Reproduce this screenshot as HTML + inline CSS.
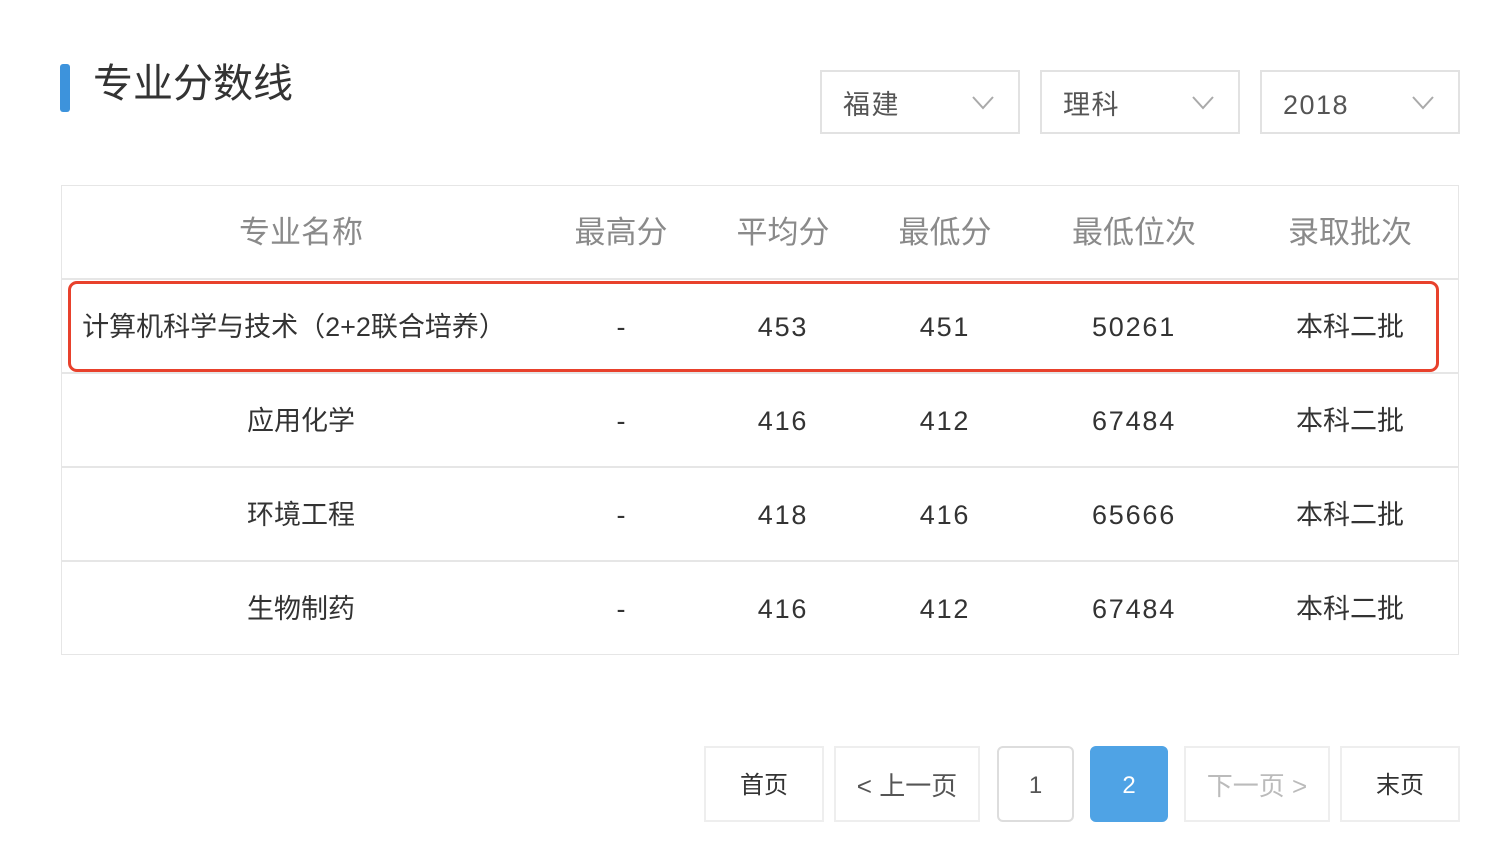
<!DOCTYPE html>
<html><head><meta charset="utf-8"><style>
body{margin:0;width:1502px;height:862px;background:#fff;font-family:"Liberation Sans","Noto Sans CJK SC",sans-serif;position:relative;overflow:hidden}
.a{position:absolute}
.bar{left:60px;top:64px;width:10px;height:48px;background:#3d93dc;border-radius:3px}
.title{left:93px;top:58px;font-size:40px;color:#333;line-height:52px}
.dd{top:70px;width:200px;height:64px;border:2px solid #e2e2e2;box-sizing:border-box}
.dd span{position:absolute;left:21px;top:16px;font-size:27px;color:#555;line-height:34px;letter-spacing:1.5px}
.dd svg{position:absolute;right:24px;top:24px}
.tbl{left:61px;top:185px;width:1398px;height:470px;border:1.5px solid #e6e6e6;box-sizing:border-box}
.hl{left:61px;width:1398px;height:1.5px;background:#e6e6e6}
.c{position:absolute;transform:translateX(-50%);white-space:nowrap;font-size:27px;line-height:34px}
.h{color:#8a8a8a;font-size:31px}
.d{color:#333}
.n{letter-spacing:1.8px}
.red{left:68px;top:281px;width:1371px;height:91px;border:3.5px solid #e8412c;border-radius:9px;box-sizing:border-box}
.pb{top:746px;height:76px;border:2px solid #eee;box-sizing:border-box;font-size:24px;color:#333;text-align:center;line-height:76px}
</style></head><body>
<div class="a bar"></div>
<div class="a title">专业分数线</div>
<div class="a dd" style="left:820px"><span>福建</span><svg width="22" height="14"><path d="M1 1l10 11 10-11" fill="none" stroke="#aaa" stroke-width="2"/></svg></div>
<div class="a dd" style="left:1040px"><span>理科</span><svg width="22" height="14"><path d="M1 1l10 11 10-11" fill="none" stroke="#aaa" stroke-width="2"/></svg></div>
<div class="a dd" style="left:1260px"><span>2018</span><svg width="22" height="14"><path d="M1 1l10 11 10-11" fill="none" stroke="#aaa" stroke-width="2"/></svg></div>
<div class="a tbl"></div>
<div class="a hl" style="top:278px"></div>
<div class="a hl" style="top:372px"></div>
<div class="a hl" style="top:466px"></div>
<div class="a hl" style="top:560px"></div>
<div class="c h" style="left:301px;top:216px">专业名称</div>
<div class="c h" style="left:621px;top:216px">最高分</div>
<div class="c h" style="left:783px;top:216px">平均分</div>
<div class="c h" style="left:945px;top:216px">最低分</div>
<div class="c h" style="left:1134px;top:216px">最低位次</div>
<div class="c h" style="left:1350px;top:216px">录取批次</div>

<div class="c d" style="left:294px;top:310px">计算机科学与技术（2+2联合培养）</div>
<div class="c d" style="left:621px;top:310px">-</div>
<div class="c d n" style="left:783px;top:310px">453</div>
<div class="c d n" style="left:945px;top:310px">451</div>
<div class="c d n" style="left:1134px;top:310px">50261</div>
<div class="c d" style="left:1350px;top:310px">本科二批</div>

<div class="c d" style="left:301px;top:404px">应用化学</div>
<div class="c d" style="left:621px;top:404px">-</div>
<div class="c d n" style="left:783px;top:404px">416</div>
<div class="c d n" style="left:945px;top:404px">412</div>
<div class="c d n" style="left:1134px;top:404px">67484</div>
<div class="c d" style="left:1350px;top:404px">本科二批</div>

<div class="c d" style="left:301px;top:498px">环境工程</div>
<div class="c d" style="left:621px;top:498px">-</div>
<div class="c d n" style="left:783px;top:498px">418</div>
<div class="c d n" style="left:945px;top:498px">416</div>
<div class="c d n" style="left:1134px;top:498px">65666</div>
<div class="c d" style="left:1350px;top:498px">本科二批</div>

<div class="c d" style="left:301px;top:592px">生物制药</div>
<div class="c d" style="left:621px;top:592px">-</div>
<div class="c d n" style="left:783px;top:592px">416</div>
<div class="c d n" style="left:945px;top:592px">412</div>
<div class="c d n" style="left:1134px;top:592px">67484</div>
<div class="c d" style="left:1350px;top:592px">本科二批</div>

<div class="a red"></div>

<div class="a pb" style="left:704px;width:120px">首页</div>
<div class="a pb" style="left:834px;width:146px;color:#555;font-size:26px">&lt; 上一页</div>
<div class="a pb" style="left:997px;width:77px;border-color:#ddd;border-radius:6px;color:#555">1</div>
<div class="a pb" style="left:1090px;width:78px;background:#4fa3e5;border-color:#4fa3e5;border-radius:6px;color:#fff">2</div>
<div class="a pb" style="left:1184px;width:146px;color:#bbb;font-size:26px">下一页 &gt;</div>
<div class="a pb" style="left:1340px;width:120px">末页</div>
</body></html>
